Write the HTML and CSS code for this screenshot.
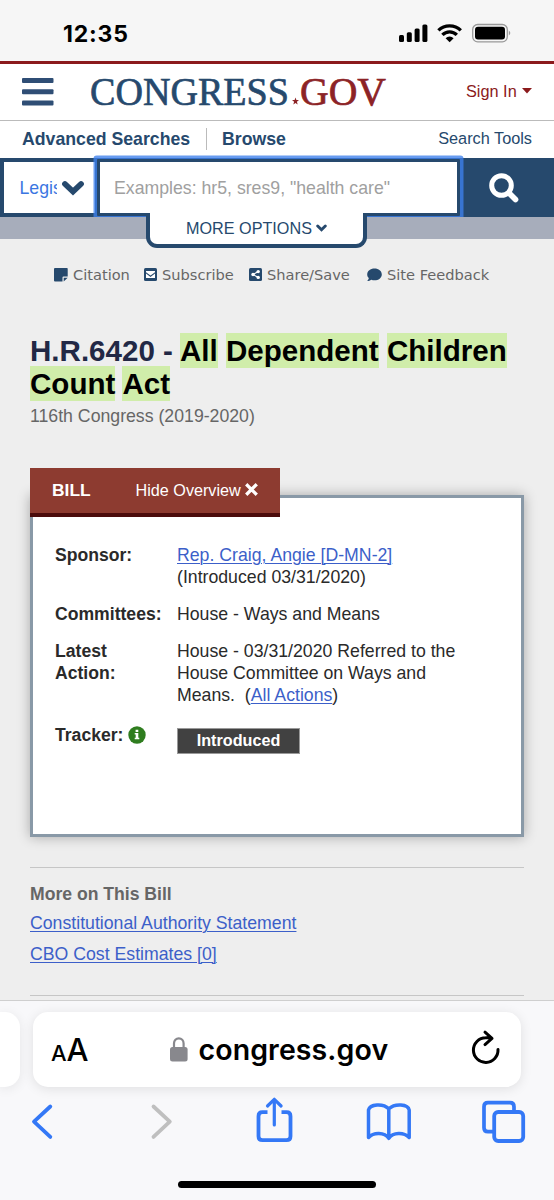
FILE: index.html
```html
<!DOCTYPE html>
<html lang="en">
<head>
<meta charset="utf-8">
<title>H.R.6420 - All Dependent Children Count Act</title>
<link rel="stylesheet" href="styles.css">
</head>
<body>
<div class="status">
  <span class="clock">12:35</span>
  <svg class="status-icons" width="114" height="20" viewBox="0 0 114 20">
    <rect x="0" y="12" width="5" height="7" rx="1.5"/>
    <rect x="7.8" y="9.3" width="5" height="9.7" rx="1.5"/>
    <rect x="15.6" y="5.5" width="5" height="13.5" rx="1.5"/>
    <rect x="23.4" y="1.5" width="5" height="17.5" rx="1.5"/>
    <g fill="none" stroke="#000" stroke-width="3.3">
      <path d="M39.4 7.400A16 16 0 0 1 61.8 7.400"/>
      <path d="M43.4 11.900A10 10 0 0 1 57.800 11.900"/>
    </g>
    <path d="M46.600 15.200a5.700 5.700 0 0 1 8 0l-4 4z"/>
    <rect x="73.7" y="1.5" width="34.6" height="17.3" rx="5" fill="none" stroke="#999" stroke-width="1.3"/>
    <rect x="76" y="3.8" width="30" height="12.8" rx="3"/>
    <path d="M109.8 7.6q3 2.5 0 5z" fill="#999"/>
  </svg>
</div>
<header class="masthead">
  <svg class="burger" width="32" height="28" viewBox="0 0 32 28" fill="#2f4e75"><rect y="0" width="31.5" height="5" rx="1"/><rect y="11.2" width="31.5" height="5" rx="1"/><rect y="22.4" width="31.5" height="5" rx="1"/></svg>
  <svg class="logo" width="298" height="36" viewBox="0 0 298 36">
    <text class="logo-main" x="0" y="31" textLength="199" lengthAdjust="spacingAndGlyphs">CONGRESS</text>
    <path fill="#8c2326" d="M205.500 23.500l.9 2.600h2.600l-2.100 1.700.8 2.700-2.200-1.600-2.200 1.600.8-2.700-2.100-1.700h2.600z"/>
    <text class="logo-gov" x="210" y="31" textLength="86" lengthAdjust="spacingAndGlyphs">GOV</text>
  </svg>
  <a class="signin">Sign In<svg width="10" height="6" viewBox="0 0 10 6"><path d="M0 0h10L5 5.500z" fill="#8b1a1c"/></svg></a>
</header>
<nav class="links">
  <a class="adv">Advanced Searches</a>
  <a class="browse">Browse</a>
  <a class="tools">Search Tools</a>
</nav>
<form class="search">
  <div class="scope"><span class="scope-text">Legis</span><svg width="24" height="16" viewBox="0 0 24 16"><path d="M4 4l8 7.500L20 4" fill="none" stroke="#26496d" stroke-width="5.800" stroke-linecap="round"/></svg></div>
  <div class="query">Examples: hr5, sres9, "health care"</div>
  <svg class="magnifier" width="32" height="32" viewBox="0 0 32 32" fill="none" stroke="#fff"><circle cx="13.500" cy="13.500" r="9.800" stroke-width="5"/><path d="M21 21l6.500 6.500" stroke-width="5.600" stroke-linecap="round"/></svg>
</form>
<div class="strip">
  <div class="more">MORE OPTIONS<svg width="11" height="8" viewBox="0 0 11 8"><path d="M1.700 2L5.500 5.800 9.300 2" fill="none" stroke="#26496d" stroke-width="2.900" stroke-linecap="round"/></svg></div>
</div>
<main class="page">
  <div class="actions">
    <span class="act cite"><svg width="14" height="14" viewBox="0 0 14 14"><path fill="#26496d" d="M1 0h12q.7 0 .7.700V8.500H9.500q-1 0-1 1V13.500H1q-1 0-1-1V1q0-1 1-1zM9.700 9.700h4L9.700 13.500z"/></svg>Citation</span>
    <span class="act sub"><svg width="13" height="13" viewBox="0 0 13 13"><rect width="13" height="13" rx="1.500" fill="#26496d"/><path d="M2 3h9v1.200L6.500 7.600 2 4.200zM2 5.600l4.500 3.300L11 5.600V10H2z" fill="#fff"/></svg>Subscribe</span>
    <span class="act share"><svg width="13" height="13" viewBox="0 0 13 13"><rect width="13" height="13" rx="1.500" fill="#26496d"/><path d="M9 3.700L4 6.500l5 2.800" fill="none" stroke="#fff" stroke-width="1.100"/><g fill="#fff"><circle cx="9.200" cy="3.600" r="1.700"/><circle cx="4" cy="6.500" r="1.700"/><circle cx="9.200" cy="9.400" r="1.700"/></g></svg>Share/Save</span>
    <span class="act feed"><svg width="15" height="14" viewBox="0 0 15 14"><path fill="#26496d" d="M7.500.5c4.100 0 7.300 2.600 7.300 5.900s-3.200 5.900-7.300 5.900c-1.200 0-2.200-.2-3.200-.6C3.200 12.500 1.700 13 .2 13c.9-1 1.500-2.100 1.600-3C.7 9 .2 7.700.2 6.400.2 3.100 3.400.5 7.500.5z"/></svg>Site Feedback</span>
  </div>
  <h1 class="title">H.R.6420 - <mark>All</mark> <mark>Dependent</mark> <mark>Children</mark> <mark>Count</mark> <mark>Act</mark></h1>
  <p class="congress">116th Congress (2019-2020)</p>
  <section class="overview">
    <div class="tab"><b>BILL</b><span class="hide">Hide Overview<svg width="13" height="13" viewBox="0 0 13 13"><path d="M2.400 2.400l8.200 8.200M10.600 2.400l-8.200 8.200" stroke="#fff" stroke-width="3.300" stroke-linecap="square"/></svg></span></div>
    <dl class="card">
      <dt>Sponsor:</dt><dd><a>Rep. Craig, Angie [D-MN-2]</a><br>(Introduced 03/31/2020)</dd>
      <dt>Committees:</dt><dd>House - Ways and Means</dd>
      <dt>Latest<br>Action:</dt><dd>House - 03/31/2020 Referred to the<br>House Committee on Ways and<br>Means. &nbsp;(<a>All Actions</a>)</dd>
      <dt class="track">Tracker:<svg width="18" height="18" viewBox="0 0 18 18"><circle cx="9" cy="9" r="8.700" fill="#2f7d1f"/><path fill="#fff" d="M7.600 3.700h2.700v2.200H7.600zM6.700 7h3.600v4.700h1v1.600H6.700v-1.600h1V8.600h-1z"/></svg></dt><dd><span class="stage">Introduced</span></dd>
    </dl>
  </section>
  <section class="related">
    <h2>More on This Bill</h2>
    <a>Constitutional Authority Statement</a>
    <a>CBO Cost Estimates [0]</a>
  </section>
  <hr class="rule">
</main>
<footer class="safari">
  <div class="tabs">
    <div class="prev-tab"></div>
    <div class="address">
      <span class="aa"><small>A</small>A</span>
      <span class="site"><svg width="18" height="25" viewBox="0 0 18 25"><rect y="10" width="17.600" height="14.500" rx="2.500" fill="#88888d"/><path d="M4 11V6.500a4.800 5.200 0 0 1 9.600 0V11" fill="none" stroke="#88888d" stroke-width="2.200"/></svg><span class="domain">congress.gov</span></span>
      <svg class="reload" width="30" height="36" viewBox="0 0 30 36" fill="none" stroke="#000" stroke-width="3" stroke-linecap="round" stroke-linejoin="round"><path d="M27 20.500A12.300 12.300 0 1 1 14.700 8.800Q18 8.500 20.500 9.200M14 3.200l7 6.200-7 6.200"/></svg>
    </div>
  </div>
  <svg class="toolbar" width="554" height="60" viewBox="0 1090 554 60" fill="none" stroke="#3478f6" stroke-width="3.800" stroke-linecap="round" stroke-linejoin="round">
    <path d="M50.300 1106.500L34 1121.700l16.300 15.200"/>
    <path stroke="#bfbfbf" d="M153.500 1106.500l16.300 15.200-16.300 15.200"/>
    <g stroke-linecap="butt"><path d="M267.500 1112.200h-5q-4 0-4 4v20q0 4 4 4h24q4 0 4-4v-20q0-4-4-4h-5"/></g>
    <path d="M274.300 1125v-25M267.500 1106l6.800-6.700 6.800 6.700" stroke-width="3.200"/>
    <path stroke-width="3.500" d="M388.800 1108.800C383 1103 370 1104 368.500 1110v27.500c5-5.500 16-5.500 20.300.8C393 1132 404 1132 409.200 1137.500V1110C408 1104 395 1103 388.800 1108.800zM388.800 1109v29"/>
    <path stroke-width="3.700" d="M493 1131.700h-5q-4 0-4-4v-21q0-4 4-4h22q4 0 4 4v5"/>
    <rect x="494.200" y="1112" width="29" height="29" rx="4"/>
  </svg>
  <div class="home"></div>
</footer>
</body>
</html>
```
FILE: styles.css
```css
* { box-sizing: border-box; }
body { margin: 0; width: 554px; height: 1200px; overflow: hidden; display: flex; flex-direction: column; background: #eee; font: 17.700px/22px "Liberation Sans", Arial, sans-serif; color: #2a2a2a; }
svg { flex: none; display: block; }

.status { flex: none; height: 64px; background: #f6f6f6; border-bottom: 3px solid #8b1a1c; display: flex; justify-content: space-between; align-items: flex-start; padding: 0 41px 0 63px; }
.clock { font: 700 23px/28px Inter, sans-serif; letter-spacing: .8px; color: #000; padding-top: 20px; }
.status-icons { margin-top: 23px; }

.masthead { flex: none; height: 57px; background: #fff; border-bottom: 1px solid #bbb; display: flex; align-items: flex-start; }
.burger { margin: 13.500px 0 0 22px; }
.logo { margin: 10px 0 0 36px; overflow: visible; font-family: "Liberation Serif", serif; font-size: 40px; }
.logo-main { fill: #26496d; stroke: #26496d; stroke-width: .7; }
.logo-gov { fill: #8c2326; stroke: #8c2326; stroke-width: .7; }
.signin { margin: 16px 0 0 78px; font-size: 16.300px; color: #8b1a1c; display: flex; gap: 5px; white-space: nowrap; }
.signin svg { margin-top: 8px; }

.links { flex: none; height: 37px; background: #fff; display: flex; color: #26496d; font-weight: bold; padding-top: 7px; }
.adv { padding-left: 22px; width: 207px; height: 22px; border-right: 1px solid #bbb; line-height: 23px; }
.browse { padding-left: 15px; line-height: 23px; }
.tools { margin: -2px 22px 0 auto; font-weight: normal; font-size: 16.300px; line-height: 24px; }

.search { flex: none; height: 59px; background: #26496d; display: flex; }
.scope { width: 91px; height: 51px; margin: 4px 0 0 4px; background: #fff; display: flex; align-items: center; padding-left: 15.500px; }
.scope-text { width: 37px; overflow: hidden; color: #3b76e2; margin-right: 4px; }
.query { width: 363px; height: 57px; margin: 1px 0 0 2px; border: 3px solid #26496d; background: #fff; box-shadow: 0 0 0 3.500px rgba(62,128,236,.78); color: #a0a0a0; line-height: 53px; padding-left: 14px; border-radius: 1px; position: relative; }
.magnifier { margin: 14px 0 0 28px; }
.strip { flex: none; height: 22px; background: #a7adbb; position: relative; }
.more { position: absolute; left: 146px; top: -4px; width: 221px; height: 35px; background: #fff; border: 4px solid #26496d; border-top: 0; border-radius: 0 0 11px 11px; display: flex; gap: 4px; justify-content: center; font-size: 16.200px; line-height: 30px; color: #26496d; }
.more svg { margin-top: 10.500px; }

.page { flex: none; height: 761px; padding: 0 30px; }
.actions { display: flex; padding: 25px 0 0 24px; height: 94px; font: 14.600px/22px "DejaVu Sans", Verdana, sans-serif; color: #666; white-space: nowrap; }
.act { display: flex; height: 22px; gap: 5px; }
.act svg { margin-top: 4px; }
.cite { width: 90px; }
.sub { width: 105px; }
.share { width: 118px; }
.title { margin: 2px 0 0; font-size: 29.560px; line-height: 32.500px; color: #222845; width: 494px; }
.title mark { background: #d0edaa; color: #000; padding: 1px 0; }
.congress { margin: 5px 0 0; color: #666; }
.overview { height: 368.500px; margin: 41px 0 30.500px; position: relative; padding-top: 26.500px; }
.tab { position: absolute; left: 0; top: 0; width: 250px; height: 48.500px; background: #8d3b30; border-bottom: 4px solid #4b0c0c; color: #fff; display: flex; padding: 11px 0 0 22px; }
.tab b { width: 83.500px; font-size: 17.400px; }
.hide { display: flex; gap: 4px; font-size: 16.200px; white-space: nowrap; }
.hide svg { margin-top: 4px; }
.card { margin: 0; height: 342px; background: #fff; border: 3px solid #8999a7; box-shadow: 0 0 12px rgba(0,0,0,.3); padding: 46px 0 0 22px; display: grid; grid-template-columns: 122px 1fr; align-content: start; row-gap: 15px; }
.card dt { font-weight: bold; font-size: 17.600px; }
.card dd { margin: 0; white-space: nowrap; }
a { text-underline-offset: 2px; }
.card a, .related a { color: #3c5fc9; text-decoration: underline; text-decoration-thickness: 1px; }
.track { display: flex; gap: 5px; padding-top: 3px; }
.track svg { margin-top: 2px; }
.stage { display: block; margin-top: 7px; width: 123px; height: 26px; background: #414141; border: 1.500px solid #999; color: #fff; text-align: center; font-weight: bold; font-size: 16.200px; line-height: 23px; }
.related { border-top: 1px solid #c6c6c6; height: 128px; padding-top: 15px; }
.related h2 { margin: 0 0 7px; font-size: 17.600px; line-height: 22px; color: #666; }
.related a { display: block; margin-bottom: 9px; width: max-content; }
.rule { margin: 0; border: 0; height: 1px; background: #c6c6c6; }

.safari { flex: none; height: 200px; background: #f8f8fa; border-top: 1px solid #cfcfcf; display: flex; flex-direction: column; position: relative; }
.tabs { display: flex; height: 86px; padding-top: 11px; }
.prev-tab { width: 20px; height: 75px; background: #fff; border-radius: 0 15px 15px 0; box-shadow: 0 2px 12px rgba(0,0,0,.08); margin-right: 13px; }
.address { width: 488px; height: 75px; background: #fff; border-radius: 15px; box-shadow: 0 2px 12px rgba(0,0,0,.1); color: #000; display: flex; font-family: Inter, sans-serif; }
.aa { width: 136.500px; padding: 21px 0 0 18px; font-size: 31px; line-height: 34px; font-weight: 500; }
.aa small { font-size: 22px; }
.site { display: flex; width: 300px; gap: 11px; }
.site svg { margin-top: 25px; }
.domain { font-size: 28.500px; line-height: 36px; font-weight: 600; letter-spacing: .1px; padding-top: 20px; }
.reload { margin: 17px 0 0 1px; }
.toolbar { margin-top: 3px; }
.home { width: 198px; height: 7px; border-radius: 4px; background: #000; margin: 31px 0 0 178px; }
```
